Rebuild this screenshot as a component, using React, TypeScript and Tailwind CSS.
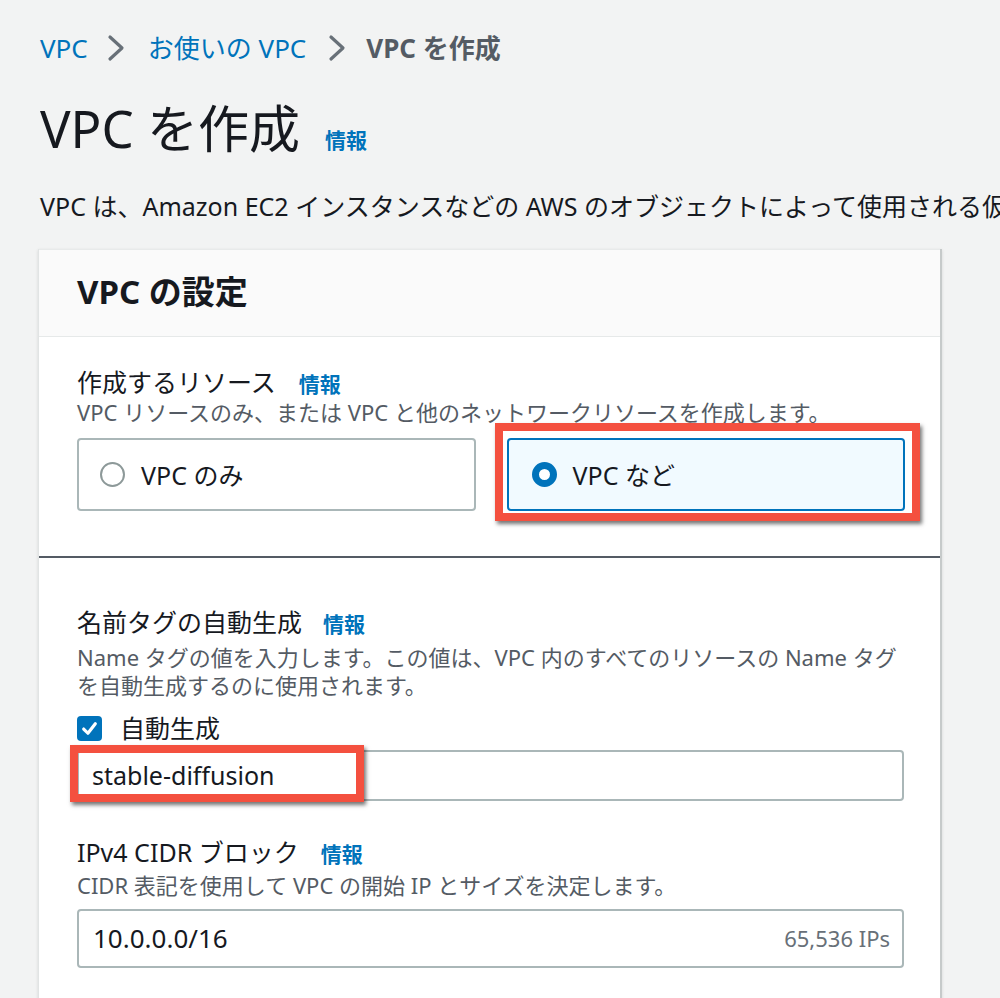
const font = "font-['Noto_Sans','Noto_Sans_CJK_JP',sans-serif]";

function Chevron() {
  return (
    <svg width="18" height="28" viewBox="0 0 18 28" className="shrink-0">
      <path d="M3 3 L15 14 L3 25" fill="none" stroke="#687078" strokeWidth="3.2" strokeLinecap="round" strokeLinejoin="round" />
    </svg>
  );
}

function Info({ className = "" }: { className?: string }) {
  return <span className={`text-[21px] font-bold text-[#0073bb] ${className}`}>情報</span>;
}

function FieldLabel({ text, gap }: { text: string; gap: string }) {
  return (
    <div className="flex items-baseline h-[32px]">
      <span className="text-[25px] leading-[32px] text-[#16191f]">{text}</span>
      <Info className={gap} />
    </div>
  );
}

function RedBox({ className }: { className: string }) {
  return (
    <div
      className={`absolute pointer-events-none border-[8px] border-[#f4503f] shadow-[2px_3px_4px_rgba(0,0,0,0.55)] ${className}`}
    />
  );
}

export default function App() {
  return (
    <div className={`w-[1000px] h-[998px] overflow-hidden bg-[#f2f3f3] text-[#16191f] ${font}`}>
      <div className="pl-[40px] pt-[32px]">
        <nav className="flex items-center h-[32px] text-[26px] leading-[32px]">
          <span className="text-[#0073bb]">VPC</span>
          <span className="ml-[19px] mr-[23px]">
            <Chevron />
          </span>
          <span className="text-[#0073bb]">お使いの VPC</span>
          <span className="ml-[22px] mr-[20px]">
            <Chevron />
          </span>
          <span className="text-[#545b64] font-bold">VPC を作成</span>
        </nav>
        <div className="mt-[34px] flex items-baseline h-[60px]">
          <h1 className="text-[51px] leading-[60px] font-normal">VPC を作成</h1>
          <Info className="ml-[25px]" />
        </div>
        <p className="mt-[32px] text-[25px] leading-[32px] whitespace-nowrap">
          VPC は、Amazon EC2 インスタンスなどの AWS のオブジェクトによって使用される仮想ネットワークです。
        </p>
      </div>

      <div className="ml-[38px] mt-[27px] w-[904px] bg-white border-l border-[#e1e4e4] border-r-2 border-r-[#c6caca] shadow-[0_1px_3px_rgba(0,0,0,0.12)]">
        <div className="bg-[#fafafa] border-t border-[#e8eaea] border-b border-b-[#e6e9e9] px-[38px] pt-[22px] pb-[24px]">
          <h2 className="text-[33px] leading-[40px] font-bold">VPC の設定</h2>
        </div>

        <div className="px-[38px] pt-[29px] pb-[45px]">
          <FieldLabel text="作成するリソース" gap="ml-[23px]" />
          <p className="text-[22px] leading-[28px] text-[#545b64] whitespace-nowrap">
            VPC リソースのみ、または VPC と他のネットワークリソースを作成します。
          </p>
          <div className="mt-[12px] grid grid-cols-2 gap-[31px] w-[828px]">
            <div className="h-[73px] rounded-[4px] border-2 border-[#aab7b8] flex items-center pl-[21px]">
              <span className="w-[25px] h-[25px] rounded-full border-2 border-[#8d9999] bg-white" />
              <span className="ml-[16px] text-[25px] leading-[32px]">VPC のみ</span>
            </div>
            <div className="relative">
              <div className="h-[73px] rounded-[4px] border-2 border-[#0073bb] bg-[#f1faff] flex items-center pl-[23px]">
                <span className="w-[25px] h-[25px] rounded-full border-[7px] border-[#0073bb] bg-white" />
                <span className="ml-[16px] text-[25px] leading-[32px]">VPC など</span>
              </div>
              <RedBox className="-left-[12px] -top-[15px] -right-[15px] -bottom-[10px]" />
            </div>
          </div>
        </div>

        <div className="border-t-2 border-[#545b64] px-[38px] pt-[48px] pb-[60px]">
          <FieldLabel text="名前タグの自動生成" gap="ml-[21px]" />
          <p className="mt-[5px] text-[22px] leading-[28px] text-[#545b64] whitespace-nowrap">
            Name タグの値を入力します。この値は、VPC 内のすべてのリソースの Name タグ
            <br />
            を自動生成するのに使用されます。
          </p>
          <div className="mt-[13px] flex items-center h-[32px]">
            <span className="w-[25px] h-[25px] rounded-[4px] bg-[#0073bb] flex items-center justify-center">
              <svg width="19" height="19" viewBox="0 0 18 18">
                <path d="M3.5 9.5 L7.5 13.5 L14.5 4.5" fill="none" stroke="white" strokeWidth="3" strokeLinecap="round" strokeLinejoin="round" />
              </svg>
            </span>
            <span className="ml-[18px] text-[25px] leading-[32px]">自動生成</span>
          </div>
          <div className="relative mt-[6px] w-[827px]">
            <div className="h-[51px] rounded-[4px] border-2 border-[#aab7b8] flex items-center pl-[13px] text-[25px]">
              stable-diffusion
            </div>
            <RedBox className="-left-[7px] -top-[5px] w-[294px] h-[57px]" />
          </div>

          <div className="mt-[35px]">
            <FieldLabel text="IPv4 CIDR ブロック" gap="ml-[22px]" />
          </div>
          <p className="mt-[3px] text-[22px] leading-[28px] text-[#545b64] whitespace-nowrap">
            CIDR 表記を使用して VPC の開始 IP とサイズを決定します。
          </p>
          <div className="mt-[10px] w-[827px] h-[59px] rounded-[4px] border-2 border-[#aab7b8] flex items-center justify-between pl-[14px] pr-[12px]">
            <span className="text-[26px]">10.0.0.0/16</span>
            <span className="text-[22px] text-[#687078]">65,536 IPs</span>
          </div>
        </div>
      </div>
    </div>
  );
}
